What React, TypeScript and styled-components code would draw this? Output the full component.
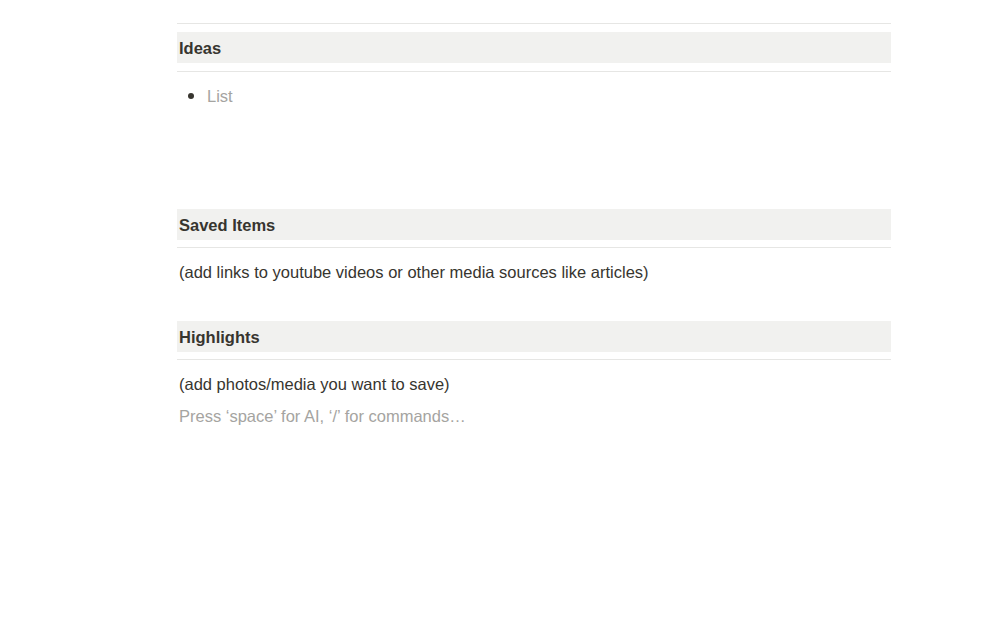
import React from 'react';
import styled, { createGlobalStyle } from 'styled-components';

const GlobalStyle = createGlobalStyle`
    body {
        margin: 0;
        background: #ffffff;
        font-family: "Liberation Sans", Arial, sans-serif;
        color: #37352f;
    }
`;

const Styled = {
    Page: styled.div`
        width: 1005px;
        height: 641px;
        padding-left: 177px;
        box-sizing: border-box;
        overflow: hidden;
    `,
    Column: styled.div`
        width: 714px;
        display: flex;
        flex-direction: column;
    `,
    Divider: styled.div<{ $top: number }>`
        height: 1px;
        background: #e6e6e4;
        margin-top: ${(p) => p.$top}px;
    `,
    Band: styled.div<{ $top: number }>`
        height: 31px;
        margin-top: ${(p) => p.$top}px;
        background: #f1f1ef;
        display: flex;
        align-items: center;
        padding-left: 2px;
        padding-top: 1px;
        box-sizing: border-box;
        font-size: 16.5px;
        font-weight: 700;
        color: #37352f;
    `,
    Bullet: styled.div<{ $top: number }>`
        display: flex;
        align-items: center;
        height: 24px;
        margin-top: ${(p) => p.$top}px;
        padding-left: 11px;
        gap: 13px;
        font-size: 16.5px;
        color: #a5a4a1;
        &::before {
            content: '';
            width: 6px;
            height: 6px;
            border-radius: 50%;
            background: #37352f;
        }
    `,
    Line: styled.div<{ $top: number; $muted?: boolean }>`
        height: 24px;
        line-height: 24px;
        margin-top: ${(p) => p.$top}px;
        padding-left: 2px;
        font-size: 16.5px;
        color: ${(p) => (p.$muted ? '#a5a4a1' : '#37352f')};
    `,
};

const App = () => {
    return (
        <Styled.Page>
            <GlobalStyle />
            <Styled.Column>
                <Styled.Divider $top={23} />
                <Styled.Band $top={8}>Ideas</Styled.Band>
                <Styled.Divider $top={8} />
                <Styled.Bullet $top={12}>List</Styled.Bullet>

                <Styled.Band $top={101}>Saved Items</Styled.Band>
                <Styled.Divider $top={7} />
                <Styled.Line $top={12}>
                    (add links to youtube videos or other media sources like articles)
                </Styled.Line>

                <Styled.Band $top={37}>Highlights</Styled.Band>
                <Styled.Divider $top={7} />
                <Styled.Line $top={12}>(add photos/media you want to save)</Styled.Line>
                <Styled.Line $top={8} $muted>
                    Press ‘space’ for AI, ‘/’ for commands…
                </Styled.Line>
            </Styled.Column>
        </Styled.Page>
    );
};

export default App;
